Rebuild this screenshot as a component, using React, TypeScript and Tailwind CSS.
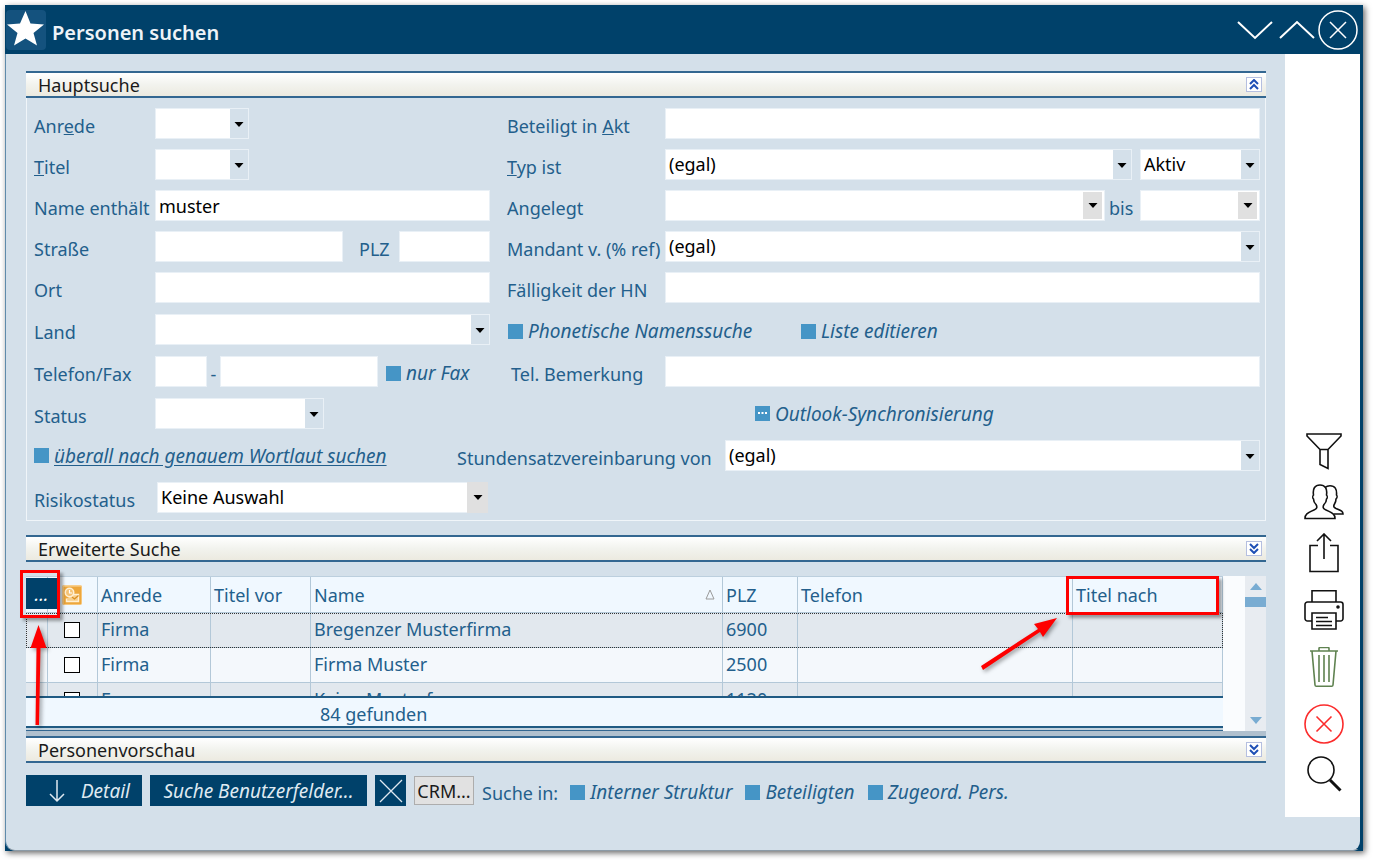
import { ReactNode } from 'react';
import clsx from 'clsx';

interface Person {
  salutation: string;
  name: string;
  zip: string;
}

const PEOPLE: Person[] = [
  { salutation: 'Firma', name: 'Bregenzer Musterfirma', zip: '6900' },
  { salutation: 'Firma', name: 'Firma Muster', zip: '2500' },
  { salutation: 'Frau', name: 'Keine Musterfrau', zip: '1120' },
];

function Field({ id, label, value, className }: { id: string; label?: string; value?: string; className?: string }) {
  return (
    <input
      id={id}
      type="text"
      aria-label={label}
      defaultValue={value}
      className={clsx('h-[31px] min-w-0 border border-[#e9f0f6] bg-white px-[3px] text-black outline-none', className)}
    />
  );
}

interface SelectProps {
  id: string;
  label?: string;
  value?: string;
  className?: string;
  variant?: 'blue' | 'gray' | 'flat';
}

function Select({ id, label, value = '', className, variant = 'blue' }: SelectProps) {
  return (
    <div className={clsx('relative h-[31px] min-w-0', className)}>
      <select
        id={id}
        aria-label={label}
        defaultValue={value}
        className="block h-full w-full appearance-none border border-[#e9f0f6] bg-white px-[3px] pb-px text-black outline-none"
      >
        <option value={value}>{value}</option>
      </select>
      <span
        className={clsx(
          'pointer-events-none absolute flex justify-center',
          variant === 'blue' && 'top-px right-px bottom-px w-[18px] bg-[#d4e0ea] pt-[13px]',
          variant === 'gray' && 'top-[2px] right-[3px] bottom-[2px] w-[19px] bg-[#e0e0e0] pt-[11px]',
          variant === 'flat' && 'inset-y-0 right-0 w-[21px] bg-[#e0e0e0] pt-[13px]'
        )}
      >
        <svg width="10" height="5" viewBox="0 0 10 5">
          <path d="M0.500 0h9L5 5z" fill="#000" />
        </svg>
      </span>
    </div>
  );
}

function Label({ htmlFor, children, className }: { htmlFor: string; children: ReactNode; className?: string }) {
  return (
    <label htmlFor={htmlFor} className={clsx('shrink-0 pt-1 whitespace-nowrap', className)}>
      {children}
    </label>
  );
}

interface CheckProps {
  children: ReactNode;
  partial?: boolean;
  underline?: boolean;
  className?: string;
}

function Check({ children, partial, underline, className }: CheckProps) {
  return (
    <label className={clsx('flex shrink-0 items-center gap-[5px] text-[19px] whitespace-nowrap italic', className)}>
      <span className="relative h-[15px] w-[15px]">
        <input type="checkbox" className="block h-[15px] w-[15px] appearance-none bg-[#4595c6]" />
        {partial && (
          <svg className="pointer-events-none absolute inset-0" width="15" height="15" viewBox="0 0 15 15">
            <path d="M3 6h2v2H3zM6.5 6h2v2h-2zM10 6h2v2h-2z" fill="#fff" />
          </svg>
        )}
      </span>
      <span className={clsx(underline && 'underline underline-offset-2')}>{children}</span>
    </label>
  );
}

function SectionBar({ title, open }: { title: string; open?: boolean }) {
  return (
    <div className="flex h-[27px] items-center justify-between border-y-2 border-[#336791] bg-linear-to-b from-white via-[#f2f3ee] via-50% to-[#eceae0] pr-1 pl-3">
      <h2 className="text-[#1a1a1a]">{title}</h2>
      <button aria-label={title} className="flex h-[15px] w-4 items-center justify-center border border-[#b5bfe0] bg-white">
        <svg width="10" height="11" viewBox="0 0 10 11" fill="none" stroke="#1e4fb5" strokeWidth="2">
          {open ? <path d="M1 5l4-4 4 4M1 10l4-4 4 4" /> : <path d="M1 1l4 4 4-4M1 6l4 4 4-4" />}
        </svg>
      </button>
    </div>
  );
}

// left half of a form row; the right half starts at the same x on every row
function Left({ children }: { children?: ReactNode }) {
  return <div className="flex w-[473px] shrink-0 items-center pr-[17px]">{children}</div>;
}

function Row({ children }: { children: ReactNode }) {
  return <div className="flex h-[31px] items-center">{children}</div>;
}

function SearchForm() {
  return (
    <div className="border border-t-0 border-[#f0f5f9] pt-[10px] pr-[5px] pb-[7px] pl-[7px]">
      <div className="flex flex-col gap-[10px]">
        <Row>
          <Left>
            <Label htmlFor="anrede" className="w-[121px]">Anr<u>e</u>de</Label>
            <Select id="anrede" className="w-[94px]" />
          </Left>
          <Label htmlFor="akt" className="w-[158px]">Beteiligt in <u>A</u>kt</Label>
          <Field id="akt" className="flex-1" />
        </Row>
        <Row>
          <Left>
            <Label htmlFor="titel" className="w-[121px]"><u>T</u>itel</Label>
            <Select id="titel" className="w-[94px]" />
          </Left>
          <Label htmlFor="typ" className="w-[158px]"><u>T</u>yp ist</Label>
          <Select id="typ" value="(egal)" className="mr-2 flex-1" />
          <Select id="aktiv" label="Aktivstatus" value="Aktiv" className="w-[120px]" />
        </Row>
        <Row>
          <Left>
            <Label htmlFor="name" className="w-[121px]">Name enthält</Label>
            <Field id="name" value="muster" className="flex-1" />
          </Left>
          <Label htmlFor="von" className="w-[158px]">Angelegt</Label>
          <Select id="von" variant="gray" className="flex-1" />
          <Label htmlFor="bis" className="w-[35px] pl-1">bis</Label>
          <Select id="bis" variant="gray" className="w-[120px]" />
        </Row>
        <Row>
          <Left>
            <Label htmlFor="strasse" className="w-[121px]">Straße</Label>
            <Field id="strasse" className="flex-1" />
            <Label htmlFor="plz" className="w-14 pl-4">PLZ</Label>
            <Field id="plz" className="w-[91px]" />
          </Left>
          <Label htmlFor="mandant" className="w-[158px]">Mandant v. (% ref)</Label>
          <Select id="mandant" value="(egal)" className="flex-1" />
        </Row>
        <Row>
          <Left>
            <Label htmlFor="ort" className="w-[121px]">Ort</Label>
            <Field id="ort" className="flex-1" />
          </Left>
          <Label htmlFor="hn" className="w-[158px]">Fälligkeit der HN</Label>
          <Field id="hn" className="flex-1" />
        </Row>
      </div>
      <div className="mt-[11px] flex flex-col gap-[11px]">
        <Row>
          <Left>
            <Label htmlFor="land" className="w-[121px]">Land</Label>
            <Select id="land" className="flex-1" />
          </Left>
          <Check className="w-[294px] pt-[3px] pl-px">Phonetische Namenssuche</Check>
          <Check className="pt-[3px]">Liste editieren</Check>
        </Row>
        <Row>
          <Left>
            <Label htmlFor="vorwahl" className="w-[121px]">Telefon/Fax</Label>
            <Field id="vorwahl" label="Vorwahl" className="w-[52px]" />
            <span className="w-[13px] pt-1 text-center">-</span>
            <Field id="nummer" label="Telefonnummer" className="w-[158px]" />
            <Check className="pt-[3px] pl-2">nur Fax</Check>
          </Left>
          <Label htmlFor="bemerkung" className="w-[158px] pl-1">Tel. Bemerkung</Label>
          <Field id="bemerkung" className="flex-1" />
        </Row>
        <Row>
          <Left>
            <Label htmlFor="status" className="w-[121px]">Status</Label>
            <Select id="status" className="w-[169px]" />
          </Left>
          <Check partial className="pl-[248px]">Outlook-Synchronisierung</Check>
        </Row>
        <Row>
          <Check underline className="w-[423px]">überall nach genauem Wortlaut suchen</Check>
          <Label htmlFor="satz" className="w-[268px]">Stundensatzvereinbarung von</Label>
          <Select id="satz" value="(egal)" className="flex-1" />
        </Row>
        <Row>
          <Label htmlFor="risiko" className="w-[123px]">Risikostatus</Label>
          <Select id="risiko" variant="flat" value="Keine Auswahl" className="w-[331px]" />
        </Row>
      </div>
    </div>
  );
}

const CELL = 'border-r border-b border-[#b3c8d8] px-[3px] text-left font-normal whitespace-nowrap';

function OutlookIcon() {
  return (
    <svg width="20" height="20" viewBox="0 0 20 20" aria-label="Outlook" className="ml-[11px] block">
      <rect x="0.5" y="0.5" width="19" height="19" rx="1" fill="#eda73c" stroke="#f6c67c" />
      <path d="M1 19V1h18" fill="none" stroke="#fbd9a0" />
      <path d="M8.500 11.500l3-2h5v7h-12v-3" fill="#f7cf8d" stroke="#fff0d4" strokeWidth="1.400" />
      <path d="M10 12l2.500 2 4-3.500" fill="none" stroke="#d98e22" strokeWidth="1.200" />
      <circle cx="7.500" cy="7.500" r="4.200" fill="#f5c273" stroke="#fff0d4" strokeWidth="1.600" />
      <path d="M7.500 5v3h2.500" fill="none" stroke="#fff" strokeWidth="1.200" />
    </svg>
  );
}

function Results() {
  return (
    <div className="relative flex border-b-5 border-[#b0c0ce] pt-[14px]">
      <div className="min-w-0 flex-1">
        <div className="h-[120px] overflow-hidden border-t border-[#bccfde]">
          <table className="w-full table-fixed border-separate border-spacing-0">
            <colgroup>
              <col className="w-[22px]" />
              <col className="w-[50px]" />
              <col className="w-[113px]" />
              <col className="w-[100px]" />
              <col />
              <col className="w-[75px]" />
              <col className="w-[275px]" />
              <col className="w-[150px]" />
            </colgroup>
            <thead>
              <tr className="h-[36px] bg-[#f0f8ff]">
                <th className={clsx(CELL, 'relative')}>
                  <button className="absolute top-px left-0 z-10 h-[31px] w-[31px] bg-[#00416a] text-white italic">...</button>
                </th>
                <th className={CELL}><OutlookIcon /></th>
                <th className={CELL}>Anrede</th>
                <th className={CELL}>Titel vor</th>
                <th className={CELL}>
                  <div className="flex items-center justify-between pr-1">
                    Name
                    <svg width="10" height="11" viewBox="0 0 10 11" fill="none" stroke="#9a9a9a">
                      <path d="M5 1L1 10h8z" />
                    </svg>
                  </div>
                </th>
                <th className={CELL}>PLZ</th>
                <th className={CELL}>Telefon</th>
                <th className={CELL}>Titel nach</th>
              </tr>
            </thead>
            <tbody>
              {PEOPLE.map((p, i) => (
                <tr
                  key={p.name}
                  className={clsx(
                    'h-[35px]',
                    i % 2 === 0 ? 'bg-[#e2e8ee]' : 'bg-[#f4f8fc]',
                    i === 0 && 'outline-1 -outline-offset-1 outline-[#333] outline-dotted'
                  )}
                >
                  <td className={CELL} />
                  <td className={CELL}>
                    <input
                      type="checkbox"
                      aria-label={p.name}
                      className="ml-[13px] block h-4 w-4 appearance-none border border-black bg-white"
                    />
                  </td>
                  <td className={clsx(CELL, 'pb-[3px]')}>{p.salutation}</td>
                  <td className={CELL} />
                  <td className={clsx(CELL, 'pb-[3px]')}>{p.name}</td>
                  <td className={clsx(CELL, 'pb-[3px]')}>{p.zip}</td>
                  <td className={CELL} />
                  <td className={CELL} />
                </tr>
              ))}
            </tbody>
          </table>
        </div>
        <div className="flex h-[32px] items-center border-y-2 border-[#1f5a83] bg-[#f0f8ff] pt-[3px] pl-[294px]">84 gefunden</div>
        <div className="h-[3px] border-b border-[#336791] bg-[#c3d3df]" />
      </div>
      <div className="w-[22px] bg-[#fafcfe]" />
      <div className="flex w-[21px] flex-col items-center bg-[#e8ecf1]">
        <svg className="mt-[7px]" width="12" height="7" viewBox="0 0 12 7">
          <path d="M6 0l6 7H0z" fill="#79acd2" />
        </svg>
        <span className="mt-[7px] h-[10px] w-full bg-[#79acd2]" />
        <svg className="mt-auto mb-[7px]" width="12" height="7" viewBox="0 0 12 7">
          <path d="M0 0h12L6 7z" fill="#79acd2" />
        </svg>
      </div>

      {/* callouts */}
      <div className="pointer-events-none absolute top-[8px] -left-[6px] z-20 h-[48px] w-[40px] border-3 border-[#fe0000] shadow-[3px_3px_3px_rgba(0,0,0,0.35)]" />
      <div className="pointer-events-none absolute top-[14px] right-[47px] z-20 h-[39px] w-[153px] border-3 border-[#fe0000] shadow-[3px_3px_3px_rgba(0,0,0,0.35)]" />
      <svg className="pointer-events-none absolute top-[63px] left-[3px] z-20 drop-shadow-[2px_2px_2px_rgba(0,0,0,0.4)]" width="20" height="104" viewBox="0 0 20 104">
        <path d="M9.500 0l8 23h-6l-1.500 77H6.500l1-77H1.500z" fill="#fe0000" />
      </svg>
      <svg className="pointer-events-none absolute top-[54px] right-[207px] z-20 drop-shadow-[2px_2px_2px_rgba(0,0,0,0.4)]" width="80" height="56" viewBox="0 0 80 56">
        <path d="M78 2L64 21l-3-5L4 54l-2-4 57-37-4-5z" fill="#fe0000" />
      </svg>
    </div>
  );
}

function Tool({ label, color = '#111', children }: { label: string; color?: string; children: ReactNode }) {
  return (
    <button aria-label={label} className="block h-10 w-10">
      <svg width="40" height="40" viewBox="0 0 40 40" fill="none" stroke={color} strokeWidth="1.600">
        {children}
      </svg>
    </button>
  );
}

function Sidebar() {
  return (
    <aside className="mb-[33px] flex w-[75px] shrink-0 flex-col items-center justify-end gap-[17px] bg-white pr-px pb-[23px] pl-[3px]">
      <div className="flex flex-col gap-[10px]">
        <Tool label="Filter">
          <path d="M3 1h34v2L24 16.500H16L3 3zM16 16.500h8v19l-8-4z" />
        </Tool>
        <Tool label="Personen">
          <path d="M1 35.500c0-4 2-5.500 9-8.500 3-1 3.500-3 2-5.500-2-2-2.500-3-2.500-5.500-1-1-1-3 0-4C8.500 5.500 11 2 16 2s7.500 3.500 6.500 10c1 1 1 3 0 4 0 2.500-.5 3.500-2.500 5.500-1.500 2.500-1 4.500 2 5.500 7 3 9 4.500 9 8.500z" />
          <path d="M21 4.500c1.500-1.300 3.500-1.800 5-1.800 5 0 7 3.300 6.500 9.300 1 1 .5 3-.5 4 0 2-.5 3.500-1.500 5-1.500 2.500-.5 3.500 1.500 4.500 5 2 7 2.500 7 5.500h-9" />
        </Tool>
        <Tool label="Exportieren">
          <path d="M14 12.500H6V38.500h28V12.500h-8M20 26V1M13 8l7-7 7 7" />
        </Tool>
      </div>
      <Tool label="Drucken">
        <path d="M8 12V.8h24V12" />
        <path d="M8 31H3.500A2.500 2.500 0 0 1 1 28.500v-14A2.500 2.500 0 0 1 3.500 12h33a2.500 2.500 0 0 1 2.500 2.500v14a2.500 2.500 0 0 1-2.500 2.500H32" />
        <path d="M8 23h24v16H8zM12 27.500h12M12 31.500h16M12 35.500h16" />
        <circle cx="34" cy="17" r="1" fill="#111" />
      </Tool>
      <Tool label="Löschen" color="#5f8250">
        <path d="M6 4h28M15 4V1.500c0-.7.300-1 1-1h8c.700 0 1 .3 1 1V4M8 4l3 34c.1.800.5 1.200 1.300 1.200h15.400c.8 0 1.200-.4 1.300-1.200l3-34M15 8v27M20 8v27M25 8v27" />
      </Tool>
      <div className="flex flex-col gap-[10px]">
        <Tool label="Abbrechen" color="#fb2c2c">
          <circle cx="20" cy="20" r="19" />
          <path d="M12.500 12.500l15 15M27.500 12.500l-15 15" />
        </Tool>
        <Tool label="Suchen">
          <circle cx="17" cy="16" r="13" />
          <path d="M26 26l10.500 10.500" strokeWidth="3" />
        </Tool>
      </div>
    </aside>
  );
}

function Header() {
  return (
    <header className="flex h-[49px] items-center justify-between bg-[#00416a] pr-[5px] pl-px">
      <div className="flex items-center">
        <svg width="40" height="40" viewBox="0 0 40 40">
          <rect width="40" height="40" rx="4" fill="#14527e" />
          <path d="M19.500 1l5 12.500L38 14.500 27.500 23 31 35.500 19.500 28.500 8 35.500l3.500-12.500L1 14.500l13-1z" fill="#fff" />
        </svg>
        <h1 className="pt-[7px] pl-[6px] text-[20px] font-semibold text-[#eef3f8]">Personen suchen</h1>
      </div>
      <div className="flex items-center gap-[3px] text-white">
        <button aria-label="Nach unten" className="mr-[3px]">
          <svg width="36" height="20" viewBox="0 0 36 20" fill="none" stroke="currentColor" strokeWidth="2">
            <path d="M1 2l17 16L35 2" />
          </svg>
        </button>
        <button aria-label="Nach oben">
          <svg width="36" height="20" viewBox="0 0 36 20" fill="none" stroke="currentColor" strokeWidth="2">
            <path d="M1 18L18 2l17 16" />
          </svg>
        </button>
        <button aria-label="Schließen">
          <svg width="40" height="40" viewBox="0 0 40 40" fill="none" stroke="currentColor" strokeWidth="1.500">
            <circle cx="20" cy="20" r="19" />
            <path d="M12 12l16 16M28 12L12 28" />
          </svg>
        </button>
      </div>
    </header>
  );
}

function Footer() {
  return (
    <div className="mt-[12px] flex h-[31px] items-center">
      <button className="flex h-[31px] w-[116px] items-center justify-between bg-[#00416a] pr-3 pl-[22px] text-[19px] text-[#dfe9f1] italic">
        <svg width="18" height="24" viewBox="0 0 18 24" fill="none" stroke="currentColor" strokeWidth="1.500">
          <path d="M9 1v21M2 15l7 7 7-7" />
        </svg>
        Detail
      </button>
      <button className="ml-2 h-[31px] w-[217px] bg-[#00416a] text-[19px] text-[#dfe9f1] italic">Suche Benutzerfelder...</button>
      <button aria-label="Felder leeren" className="ml-2 flex h-[31px] w-[31px] items-center justify-center bg-[#00416a] text-[#dfe9f1]">
        <svg width="24" height="24" viewBox="0 0 24 24" fill="none" stroke="currentColor" strokeWidth="1.300">
          <path d="M1 1l22 22M23 1L1 23" />
        </svg>
      </button>
      <button className="mr-2 ml-2 h-[29px] w-[60px] border border-[#adadad] bg-[#e1e1e1] text-[#1a1a1a]">CRM...</button>
      <span className="mr-3 pt-1">Suche in:</span>
      <div className="flex gap-[13px] pt-[3px]">
        <Check>Interner Struktur</Check>
        <Check>Beteiligten</Check>
        <Check>Zugeord. Pers.</Check>
      </div>
    </div>
  );
}

export default function App() {
  return (
    <div className="min-h-screen bg-white pt-[5px] pr-[10px] pb-[9px] pl-[5px] font-['Noto_Sans','Open_Sans',sans-serif] text-[18px] leading-[22px] text-[#235f8c]">
      <div className="flex min-h-[calc(100vh-14px)] flex-col bg-[#00416a] shadow-[2px_2px_6px_rgba(0,0,0,0.6)]">
        <Header />
        <div className="flex flex-1 rounded-b-[10px] border-r-3 border-b border-l border-r-[#00416a] border-b-[#8b9aa6] border-l-[#5f8bab] bg-[#d4e0ea]">
          <main className="min-w-0 flex-1 pt-[17px] pr-[19px] pl-[20px]">
            <SectionBar title="Hauptsuche" open />
            <SearchForm />
            <div className="h-[14px]" />
            <SectionBar title="Erweiterte Suche" />
            <Results />
            <SectionBar title="Personenvorschau" />
            <Footer />
          </main>
          <Sidebar />
        </div>
      </div>
    </div>
  );
}
